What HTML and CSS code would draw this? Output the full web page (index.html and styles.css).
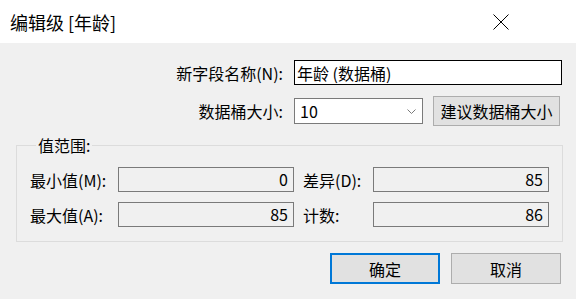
FILE: index.html
```html
<!DOCTYPE html>
<html lang="zh-CN">
<head>
    <meta charset="UTF-8">
    <title>编辑级 [年龄]</title>
    <link rel="stylesheet" href="styles.css">
</head>
<body>
    <div class="dialog">
        <div class="titlebar">
            <span class="title">编辑级 [年龄]</span>
            <svg class="close" width="16" height="16" viewBox="0 0 16 16">
                <path d="M0.5 0.5 L15.5 15.5 M15.5 0.5 L0.5 15.5" stroke="#000" stroke-width="1" fill="none"/>
            </svg>
        </div>
        <div class="content">
            <div class="row name-row">
                <label class="label">新字段名称(N):</label>
                <input class="text-input" type="text" value="年龄 (数据桶)">
            </div>
            <div class="row size-row">
                <label class="label">数据桶大小:</label>
                <div class="select">
                    <span>10</span>
                    <svg width="9" height="5" viewBox="0 0 9 5">
                        <path d="M0.5 0.5 L4.5 4.5 L8.5 0.5" stroke="#7a7a7a" stroke-width="1" fill="none"/>
                    </svg>
                </div>
                <button class="btn suggest">建议数据桶大小</button>
            </div>
            <fieldset class="range">
                <legend>值范围:</legend>
                <div class="range-row">
                    <span class="range-label">最小值(M):</span>
                    <div class="value">0</div>
                    <span class="range-label right">差异(D):</span>
                    <div class="value">85</div>
                </div>
                <div class="range-row">
                    <span class="range-label">最大值(A):</span>
                    <div class="value">85</div>
                    <span class="range-label right">计数:</span>
                    <div class="value">86</div>
                </div>
            </fieldset>
            <div class="actions">
                <button class="btn primary">确定</button>
                <button class="btn">取消</button>
            </div>
        </div>
    </div>
</body>
</html>
```

FILE: styles.css
```css
body {
    margin: 0;
    background-color: #f0f0f0;
    font-family: "Noto Sans CJK SC", "Noto Sans", sans-serif;
    font-size: 16px;
    color: #000000;
}
.dialog {
    width: 576px;
    height: 299px;
    overflow: hidden;
}
.titlebar {
    height: 43px;
    background: #ffffff;
    display: flex;
    align-items: center;
    padding-left: 10px;
    padding-right: 67px;
    justify-content: space-between;
}
.title {
    font-size: 18px;
    line-height: 20px;
}
.content {
    padding: 17px 14px 0 16px;
}
.row {
    display: flex;
    align-items: center;
    justify-content: flex-end;
}
.label {
    line-height: 20px;
    margin-right: 11px;
}
.text-input {
    width: 268px;
    height: 25px;
    box-sizing: border-box;
    border: 1px solid #000000;
    background: #ffffff;
    font-family: inherit;
    font-size: 16px;
    padding: 0 2px;
    margin: 0;
    outline: none;
}
.size-row {
    margin-top: 11px;
    padding-right: 2px;
}
.select {
    width: 129px;
    height: 26px;
    box-sizing: border-box;
    border: 1px solid #7a7a7a;
    background: #ffffff;
    display: flex;
    align-items: center;
    justify-content: space-between;
    padding: 0 6px 0 5px;
    line-height: 20px;
}
.btn {
    height: 31px;
    box-sizing: border-box;
    background: #e1e1e1;
    border: 1px solid #adadad;
    font-family: inherit;
    font-size: 16px;
    color: #000000;
    padding: 0;
    margin: 0;
}
.suggest {
    width: 127px;
    height: 30px;
    margin-left: 10px;
}
.range {
    margin: 9px 0 0 0;
    padding: 12px 13px 0 13px;
    border: 1px solid #dcdcdc;
    height: 107px;
    box-sizing: border-box;
}
.range legend {
    padding: 0 2px;
    margin-left: 6px;
    line-height: 20px;
}
.range-row {
    display: flex;
    align-items: center;
    margin-bottom: 10px;
}
.range-label {
    width: 88px;
    line-height: 20px;
}
.range-label.right {
    width: 70px;
    padding-left: 9px;
}
.value {
    width: 176px;
    height: 25px;
    box-sizing: border-box;
    border: 1px solid #7a7a7a;
    background: #f0f0f0;
    text-align: right;
    padding-right: 5px;
    line-height: 23px;
}
.actions {
    display: flex;
    justify-content: flex-end;
    margin-top: 11px;
    gap: 11px;
    padding-right: 1px;
}
.actions .btn {
    width: 110px;
}
.primary {
    border: 2px solid #0078d7;
}
```
